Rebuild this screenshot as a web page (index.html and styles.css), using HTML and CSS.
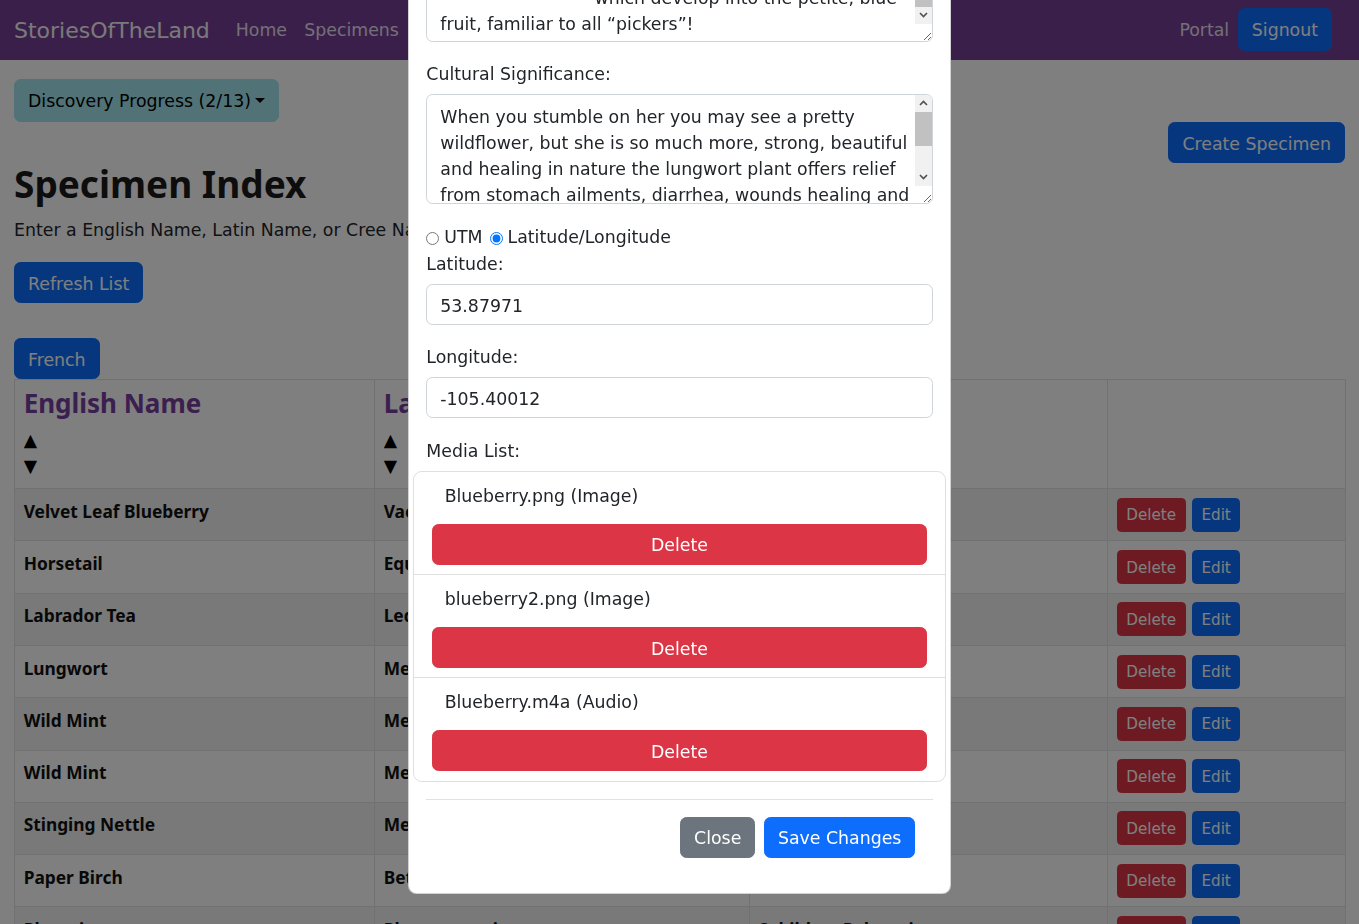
FILE: index.html
```html
<!DOCTYPE html>
<html lang="en">
<head>
<meta charset="utf-8">
<title>StoriesOfTheLand - Specimen Index</title>
<link rel="stylesheet" href="styles.css">
</head>
<body>
<nav class="navbar">
  <div class="navbar-inner">
    <a class="brand" href="#">StoriesOfTheLand</a>
    <ul class="nav-links">
      <li><a class="nav-link" href="#">Home</a></li>
      <li><a class="nav-link" href="#">Specimens</a></li>
    </ul>
    <div class="nav-right">
      <a class="nav-link" href="#">Portal</a>
      <button class="btn btn-primary btn-tall">Signout</button>
    </div>
  </div>
</nav>

<main class="page">
  <div class="progress-dd">
    <button class="btn btn-info btn-tall dropdown-toggle">Discovery Progress (2/13)</button>
  </div>
  <div class="create-row">
    <button class="btn btn-primary">Create Specimen</button>
  </div>
  <h1 class="title">Specimen Index</h1>
  <p class="hint">Enter a English Name, Latin Name, or Cree Name to search the list</p>
  <div class="refresh-row">
    <button class="btn btn-primary">Refresh List</button>
  </div>
  <div class="lang-row">
    <button class="btn btn-primary">French</button>
  </div>
  <table class="specimens">
    <colgroup>
      <col class="c1"><col class="c2"><col class="c3"><col class="c4">
    </colgroup>
    <thead>
      <tr>
        <th><div class="col-title">English Name</div><div class="sort">▲</div><div class="sort">▼</div></th>
        <th><div class="col-title">Latin Name</div><div class="sort">▲</div><div class="sort">▼</div></th>
        <th><div class="col-title">Cree Name</div><div class="sort">▲</div><div class="sort">▼</div></th>
        <th></th>
      </tr>
    </thead>
    <tbody>
      <tr><td class="name">Velvet Leaf Blueberry</td><td class="name">Vaccinium myrtilloides</td><td class="name">Ininimin</td><td><div class="actions"><button class="btn btn-danger btn-sm">Delete</button><button class="btn btn-primary btn-sm">Edit</button></div></td></tr>
      <tr><td class="name">Horsetail</td><td class="name">Equisetum arvense</td><td class="name">Kisipiskaw</td><td><div class="actions"><button class="btn btn-danger btn-sm">Delete</button><button class="btn btn-primary btn-sm">Edit</button></div></td></tr>
      <tr><td class="name">Labrador Tea</td><td class="name">Ledum groenlandicum</td><td class="name">Maskekopakwa</td><td><div class="actions"><button class="btn btn-danger btn-sm">Delete</button><button class="btn btn-primary btn-sm">Edit</button></div></td></tr>
      <tr><td class="name">Lungwort</td><td class="name">Mertensia paniculata</td><td class="name">Ocikomiwipak</td><td><div class="actions"><button class="btn btn-danger btn-sm">Delete</button><button class="btn btn-primary btn-sm">Edit</button></div></td></tr>
      <tr><td class="name">Wild Mint</td><td class="name">Mentha arvensis</td><td class="name">Amiskowihkaskwa</td><td><div class="actions"><button class="btn btn-danger btn-sm">Delete</button><button class="btn btn-primary btn-sm">Edit</button></div></td></tr>
      <tr><td class="name">Wild Mint</td><td class="name">Mentha arvensis</td><td class="name">Amiskowihkaskwa</td><td><div class="actions"><button class="btn btn-danger btn-sm">Delete</button><button class="btn btn-primary btn-sm">Edit</button></div></td></tr>
      <tr><td class="name">Stinging Nettle</td><td class="name">Medica urtica</td><td class="name">Masan</td><td><div class="actions"><button class="btn btn-danger btn-sm">Delete</button><button class="btn btn-primary btn-sm">Edit</button></div></td></tr>
      <tr><td class="name">Paper Birch</td><td class="name">Betula papyrifera</td><td class="name">Waskwayahtik</td><td><div class="actions"><button class="btn btn-danger btn-sm">Delete</button><button class="btn btn-primary btn-sm">Edit</button></div></td></tr>
      <tr><td class="name">Plantain</td><td class="name">Plantago major</td><td class="name">Sakihkan Pakwesit</td><td><div class="actions"><button class="btn btn-danger btn-sm">Delete</button><button class="btn btn-primary btn-sm">Edit</button></div></td></tr>
    </tbody>
  </table>
</main>

<div class="modal-backdrop"></div>
<div class="modal">
  <div class="modal-dialog">
    <div class="modal-content">
      <div class="modal-body">
        <div class="field">
          <label class="form-label">Description:</label>
          <div class="ta-wrap">
            <textarea class="form-control scroll-end" wrap="off">Velvet leaf blueberry is a low, spreading shrub
found in moist forests, bogs and clearings. Its
leaves and young twigs are covered in soft hairs,
giving the plant its velvety feel. In spring it
produces small white to pinkish bell flowers
                            which develop into the petite, blue
fruit, familiar to all “pickers”!</textarea>
            <div class="vscroll">
              <div class="sb-btn"><svg width="9" height="6" viewBox="0 0 9 6"><path d="M1 5 L4.5 1.5 L8 5" fill="none" stroke="#505050" stroke-width="1.6"/></svg></div>
              <div class="sb-track"><div class="sb-thumb thumb-end"></div></div>
              <div class="sb-btn"><svg width="9" height="6" viewBox="0 0 9 6"><path d="M1 1 L4.5 4.5 L8 1" fill="none" stroke="#505050" stroke-width="1.6"/></svg></div>
            </div>
          </div>
        </div>
        <div class="field">
          <label class="form-label">Cultural Significance:</label>
          <div class="ta-wrap">
            <textarea class="form-control" wrap="off">When you stumble on her you may see a pretty
wildflower, but she is so much more, strong, beautiful
and healing in nature the lungwort plant offers relief
from stomach ailments, diarrhea, wounds healing and
respiratory troubles such as coughs and colds. Her
leaves and flowers are gathered in early summer
and dried for teas, and the stories of her use
have been passed down through generations.</textarea>
            <div class="vscroll">
              <div class="sb-btn"><svg width="9" height="6" viewBox="0 0 9 6"><path d="M1 5 L4.5 1.5 L8 5" fill="none" stroke="#505050" stroke-width="1.6"/></svg></div>
              <div class="sb-track"><div class="sb-thumb thumb-start"></div></div>
              <div class="sb-btn"><svg width="9" height="6" viewBox="0 0 9 6"><path d="M1 1 L4.5 4.5 L8 1" fill="none" stroke="#505050" stroke-width="1.6"/></svg></div>
            </div>
          </div>
        </div>
        <div class="coord-toggle">
          <input type="radio" name="coord" id="utm"><label for="utm">UTM</label>
          <input type="radio" name="coord" id="latlng" checked><label for="latlng">Latitude/Longitude</label>
        </div>
        <div class="field">
          <label class="form-label">Latitude:</label>
          <input class="form-control" type="text" value="53.87971">
        </div>
        <div class="field">
          <label class="form-label">Longitude:</label>
          <input class="form-control" type="text" value="-105.40012">
        </div>
        <label class="form-label media-label">Media List:</label>
        <ul class="list-group">
          <li class="list-item">
            <p class="media-name">Blueberry.png (Image)</p>
            <button class="btn btn-danger btn-block">Delete</button>
          </li>
          <li class="list-item">
            <p class="media-name">blueberry2.png (Image)</p>
            <button class="btn btn-danger btn-block">Delete</button>
          </li>
          <li class="list-item">
            <p class="media-name">Blueberry.m4a (Audio)</p>
            <button class="btn btn-danger btn-block">Delete</button>
          </li>
        </ul>
        <div class="modal-footer">
          <button class="btn btn-secondary">Close</button>
          <button class="btn btn-primary">Save Changes</button>
        </div>
      </div>
    </div>
  </div>
</div>
<script src="script.js"></script>
</body>
</html>
```

FILE: styles.css
```css
html {
  font-size: 17.333px;
}

body {
  margin: 0;
  height: 100vh;
  overflow: hidden;
  font-family: "DejaVu Sans", sans-serif;
  font-size: 1rem;
  line-height: 1.5;
  color: #212529;
  background: #fff;
}

/* Buttons */
.btn {
  display: inline-block;
  box-sizing: border-box;
  height: 41px;
  font-family: inherit;
  font-size: 1rem;
  line-height: 1.5;
  padding: 8.5px 0.75rem 4.5px;
  border: 1px solid transparent;
  border-radius: 0.375rem;
  cursor: pointer;
  text-align: center;
}
.btn-tall {
  height: 43px;
  padding-top: 9px;
  padding-bottom: 6px;
}
.btn-primary {
  background: #0d6efd;
  border-color: #0d6efd;
  color: #fff;
}
.btn-danger {
  background: #dc3545;
  border-color: #dc3545;
  color: #fff;
}
.btn-secondary {
  background: #6c757d;
  border-color: #6c757d;
  color: #fff;
}
.btn-info {
  background: #a2e6ee;
  border-color: #a2e6ee;
  color: #000;
}
.btn-sm {
  height: 34px;
  padding: 5.5px 0.5rem 3.5px;
  font-size: 0.875rem;
  border-radius: 0.25rem;
}
.btn-block {
  display: block;
  width: 100%;
}
.dropdown-toggle::after {
  content: "";
  display: inline-block;
  margin-left: 0.255em;
  vertical-align: 0.255em;
  border-top: 0.3em solid;
  border-right: 0.3em solid transparent;
  border-left: 0.3em solid transparent;
}

/* Navbar */
.navbar {
  background: #763e96;
  padding: 8px 0 9px;
}
.navbar-inner {
  display: flex;
  align-items: center;
  padding: 0 14px;
}
.brand {
  font-size: 22px;
  color: #f4f4f4;
  text-decoration: none;
  margin-right: 1rem;
  padding-top: 2px;
}
.nav-links {
  display: flex;
  list-style: none;
  margin: 0;
  padding: 0;
}
.nav-link {
  display: block;
  padding: calc(0.5rem + 1px) 0.5rem calc(0.5rem - 1px);
  color: rgba(255, 255, 255, 0.85);
  text-decoration: none;
}
.nav-right {
  margin-left: auto;
  margin-right: 13px;
  display: flex;
  align-items: center;
}

/* Page */
.page {
  padding: 0 14px;
}
.progress-dd {
  margin-top: 19px;
}
.create-row {
  display: flex;
  justify-content: flex-end;
}
.title {
  font-family: "Noto Sans", sans-serif;
  font-weight: 700;
  font-size: 37px;
  line-height: 36px;
  padding-top: 3px;
  margin: 0 0 14.5px;
  color: #1a1a1a;
}
.hint {
  padding-top: 1px;
  margin: 0 0 18.3px;
}
.refresh-row {
  margin-bottom: 35px;
}

/* Table */
.specimens {
  width: 100%;
  table-layout: fixed;
  border-collapse: collapse;
}
.c1 { width: 360px; }
.c2 { width: 375px; }
.c3 { width: 358px; }
.c4 { width: 238px; }
.specimens th,
.specimens td {
  padding: 0.5rem;
  border: 1px solid #dee2e6;
  vertical-align: top;
  text-align: left;
  font-weight: 400;
}
.col-title {
  font-family: "Noto Sans", sans-serif;
  font-weight: 700;
  font-size: 1.5rem;
  line-height: 1.15;
  color: #76409e;
  margin-bottom: 0.5rem;
}
.sort {
  color: #000;
  line-height: 26px;
}
.specimens td.name {
  padding-top: calc(0.5rem + 1px);
  font-family: "Noto Sans", sans-serif;
  font-weight: 700;
  color: #111;
  white-space: nowrap;
  overflow: hidden;
}
.specimens tbody tr:nth-child(odd) td {
  background: rgba(0, 0, 0, 0.05);
}
.actions {
  display: flex;
  gap: 6px;
}

/* Modal */
.modal-backdrop {
  position: fixed;
  inset: 0;
  background: rgba(0, 0, 0, 0.5);
}
.modal {
  position: fixed;
  inset: 0;
  overflow: hidden;
}
.modal-dialog {
  width: 543px;
  margin: -121px auto 0;
}
.modal-content {
  background: #fff;
  border: 1px solid rgba(0, 0, 0, 0.175);
  border-radius: 0.5rem;
}
.modal-body {
  padding: 1rem;
}
.field {
  margin-bottom: 1rem;
}
.form-label {
  display: block;
  padding-top: 3px;
  margin-bottom: calc(0.5rem - 3px);
}
.form-control {
  display: block;
  width: 100%;
  height: 41px;
  box-sizing: border-box;
  padding: 8.5px 0.75rem 4.5px;
  font-family: inherit;
  font-size: 1rem;
  line-height: 1.5;
  color: #212529;
  background: #fff;
  border: 1px solid #ced4da;
  border-radius: 0.375rem;
  margin: 0;
}
.ta-wrap {
  position: relative;
}
textarea.form-control {
  height: 110px;
  padding: 10.5px 30px 2.5px 0.75rem;
  resize: vertical;
  white-space: pre;
  overflow: hidden;
}
.vscroll {
  position: absolute;
  top: 1px;
  right: 1px;
  bottom: 18px;
  width: 17px;
  display: flex;
  flex-direction: column;
  background: #f1f1f1;
  border-top-right-radius: 5px;
}
.sb-btn {
  height: 17px;
  flex: none;
  display: flex;
  align-items: center;
  justify-content: center;
}
.sb-track {
  flex: 1;
  position: relative;
}
.sb-thumb {
  position: absolute;
  left: 0;
  right: 0;
  height: 34px;
  background: #c1c1c1;
}
.thumb-start {
  top: 0;
}
.thumb-end {
  bottom: 0;
}
.coord-toggle {
  height: 28px;
  padding-top: 6px;
  box-sizing: border-box;
  display: flex;
  align-items: center;
}
.coord-toggle input {
  margin: 0 5px 0 0;
  width: 13px;
  height: 13px;
}
.coord-toggle label + input {
  margin-left: 7px;
}
.media-label {
  padding-top: 4px;
}
.list-group {
  list-style: none;
  margin: 0 -13px;
  padding: 0;
  border: 1px solid rgba(0, 0, 0, 0.125);
  border-radius: 0.5rem;
}
.list-item {
  padding: 8.67px 1rem 9.3px;
}
.list-item + .list-item {
  border-top: 1px solid rgba(0, 0, 0, 0.125);
}
.media-name {
  margin: 0 0 14.3px;
  padding-top: 3px;
  padding-left: 13px;
}
.modal-footer {
  margin-top: 17px;
  border-top: 1px solid #dee2e6;
  padding: 0.75rem;
  display: flex;
  justify-content: flex-end;
}
.modal-footer .btn {
  margin: 0.25rem;
}
```

FILE: script.js
```js
document.querySelectorAll('textarea.scroll-end').forEach(function (t) {
  t.scrollTop = t.scrollHeight;
});
```
